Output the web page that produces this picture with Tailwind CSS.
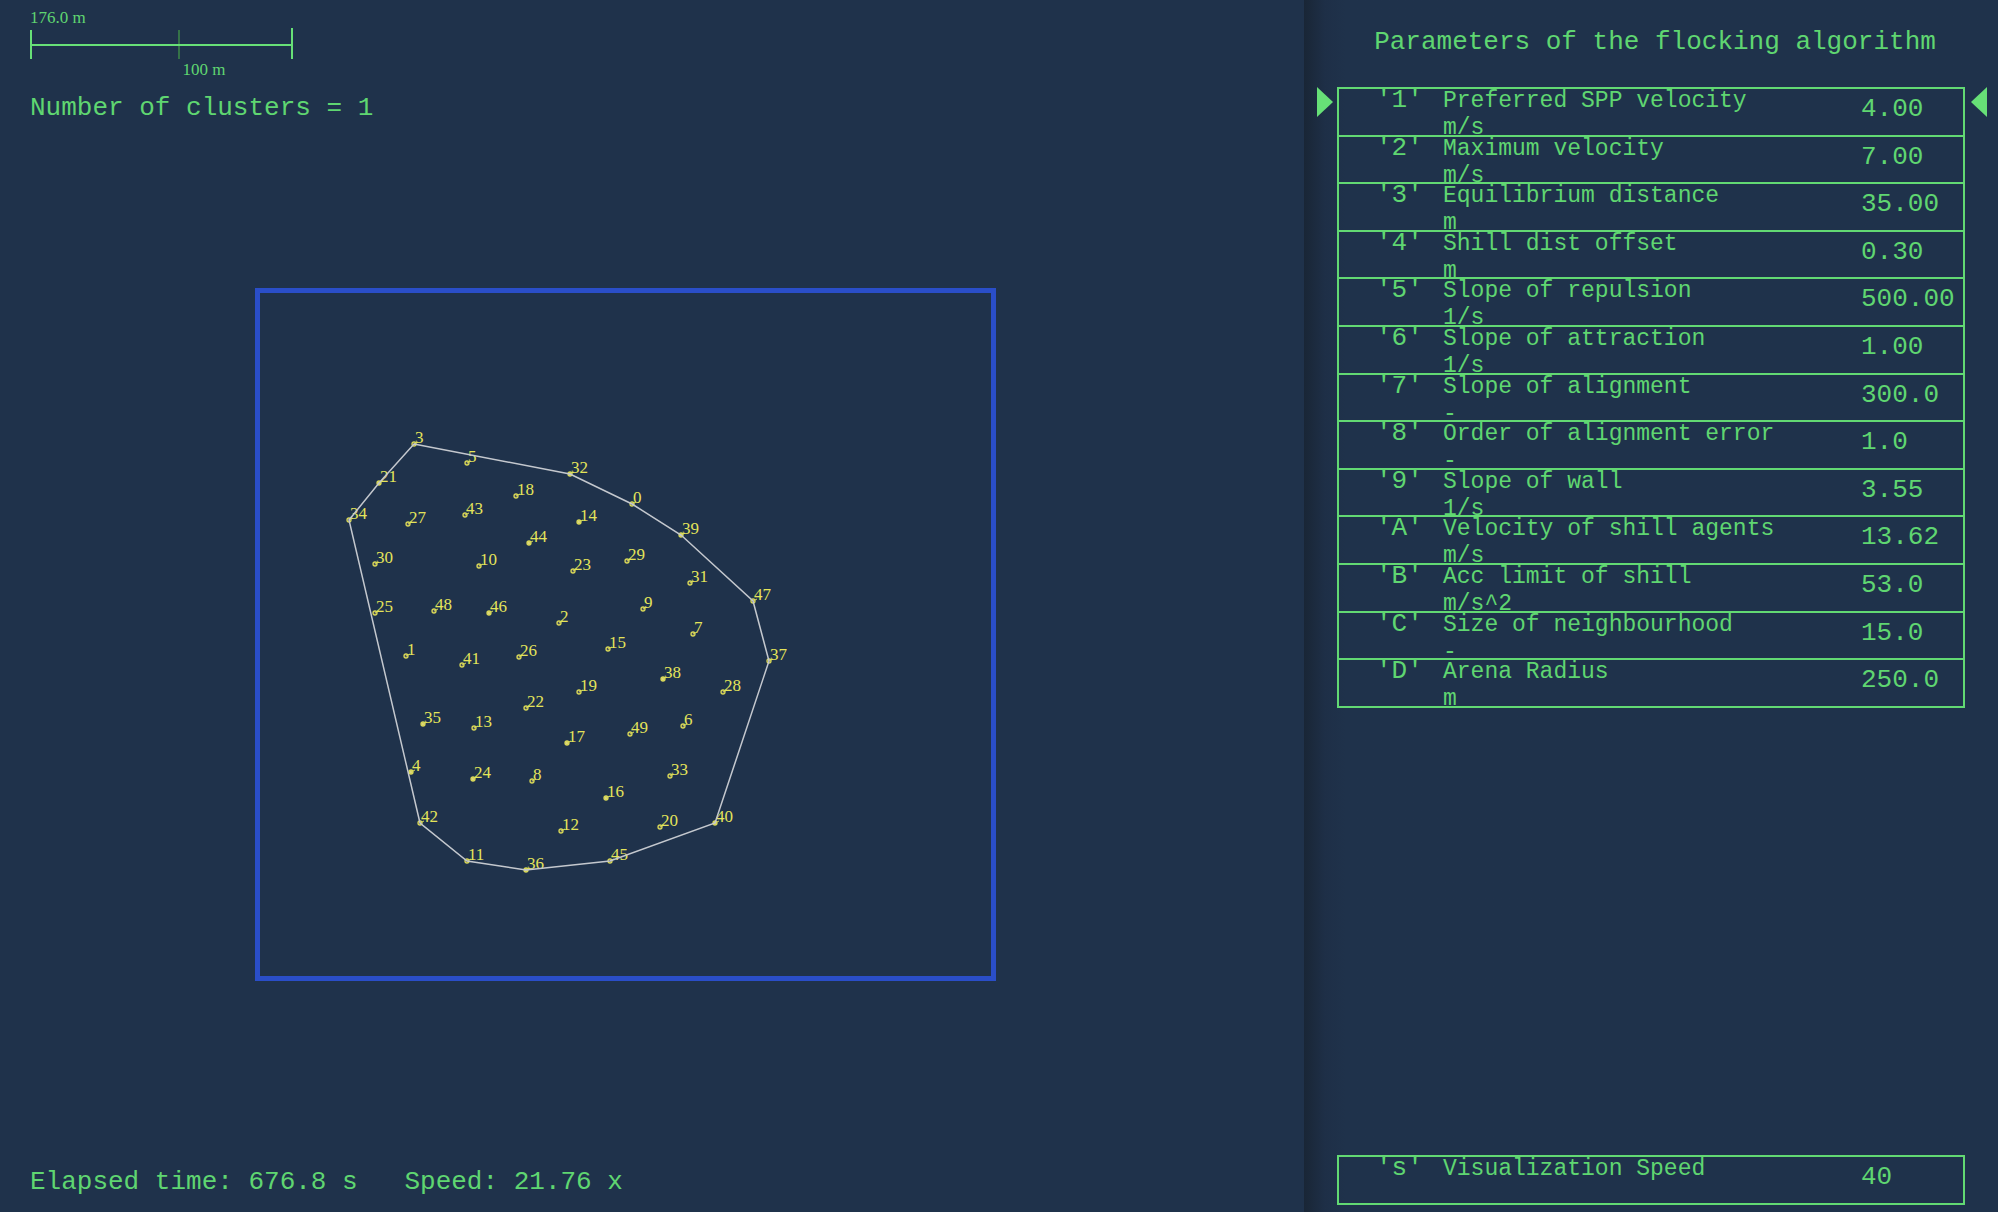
<!DOCTYPE html>
<html lang="en">
<head>
<meta charset="utf-8">
<title>Flocking simulation</title>
<script src="https://cdn.jsdelivr.net/npm/@tailwindcss/browser@4"></script>
</head>
<body class="flex min-h-screen bg-[#1f324b] font-['Liberation_Mono',monospace] text-[26px] leading-8 text-[#5fd671]">

<main class="flex min-w-0 flex-1 flex-col pt-2 pr-8 pb-[14px] pl-[30px]">
  <!-- Map scale -->
  <figure class="flex w-[263px] flex-col font-['Liberation_Serif',serif] text-[17px] leading-5">
    <span>176.0 m</span>
    <svg class="h-8 w-full" viewBox="0 0 263 32" shape-rendering="crispEdges" aria-hidden="true">
      <path d="M149 2V31" stroke="#357348" stroke-width="2"/>
      <path d="M1 2V31M262 0V31M0 17H263" stroke="#67e077" stroke-width="2"/>
    </svg>
    <figcaption class="pl-[58%]">100 m</figcaption>
  </figure>
  <p class="mt-3">Number of clusters = 1</p>

  <!-- Arena with agents and their convex hull -->
  <div class="flex flex-1 items-center justify-center pr-[52px] pb-[22px]">
    <svg id="arena" class="h-[693px] w-[741px] shrink-0 fill-[#e4e45a] font-['Liberation_Serif',serif] text-[17px]" viewBox="255 289 741 693" role="img" aria-label="Arena">
      <rect x="257.5" y="291.5" width="736" height="688" fill="none" stroke="#2a4ec8" stroke-width="5"/>
    </svg>
  </div>

  <p class="whitespace-pre">Elapsed time: 676.8 s   Speed: 21.76 x</p>
</main>

<aside class="flex w-[694px] shrink-0 flex-col bg-linear-to-r from-[#192636] via-[#1e2f47] via-[3%] to-[#1f324b] to-[6%] px-[33px] pt-[26px] pb-[7px]">
  <h1 class="pl-2 text-center">Parameters of the flocking algorithm</h1>

  <div class="relative mt-[29px]">
    <svg class="absolute top-0 -left-5 h-[30px] w-4" viewBox="0 0 16 30" fill="#67e077" aria-hidden="true"><path d="M0 0L16 15L0 30Z"/></svg>
    <svg class="absolute top-0 -right-[22px] h-[30px] w-4" viewBox="0 0 16 30" fill="#67e077" aria-hidden="true"><path d="M16 0L0 15L16 30Z"/></svg>
    <table class="h-[621px] w-full table-fixed border-collapse border-2 border-[#62d973]">
      <colgroup><col class="w-[105px]"><col><col class="w-[103px]"></colgroup>
      <tbody id="params"></tbody>
    </table>
  </div>

  <table class="mt-auto h-[50px] w-full table-fixed border-collapse border-2 border-[#62d973]">
    <colgroup><col class="w-[105px]"><col><col class="w-[103px]"></colgroup>
    <tbody id="view"></tbody>
  </table>
</aside>

<script>
const row = ([key, name, unit, value]) => `
  <tr class="border-2 border-[#62d973]">
    <td class="p-0 pl-[37px] align-top"><div class="h-10 leading-[22px]">'${key}'</div></td>
    <td class="p-0 align-top text-[23px]"><div class="h-10 whitespace-nowrap"><div class="leading-6">${name}</div><div class="leading-[30px]">${unit}</div></div></td>
    <td class="p-0 align-top"><div class="h-10 leading-10">${value}</div></td>
  </tr>`;

document.getElementById('params').innerHTML = [
  ['1', 'Preferred SPP velocity', 'm/s', '4.00'],
  ['2', 'Maximum velocity', 'm/s', '7.00'],
  ['3', 'Equilibrium distance', 'm', '35.00'],
  ['4', 'Shill dist offset', 'm', '0.30'],
  ['5', 'Slope of repulsion', '1/s', '500.00'],
  ['6', 'Slope of attraction', '1/s', '1.00'],
  ['7', 'Slope of alignment', '-', '300.0'],
  ['8', 'Order of alignment error', '-', '1.0'],
  ['9', 'Slope of wall', '1/s', '3.55'],
  ['A', 'Velocity of shill agents', 'm/s', '13.62'],
  ['B', 'Acc limit of shill', 'm/s^2', '53.0'],
  ['C', 'Size of neighbourhood', '-', '15.0'],
  ['D', 'Arena Radius', 'm', '250.0'],
].map(row).join('');
document.getElementById('view').innerHTML = row(['s', 'Visualization Speed', '', '40']);

// Agent positions, indexed by agent number
const agents = [
  [632,505],[406,657],[559,624],[414,445],[411,773],[467,464],[683,727],[693,635],[532,782],[643,610],
  [479,567],[467,862],[561,832],[474,729],[579,523],[608,650],[606,799],[567,744],[516,497],[579,693],
  [660,828],[379,484],[526,709],[573,572],[473,780],[375,614],[519,658],[408,525],[723,693],[627,562],
  [375,565],[690,584],[570,475],[670,777],[349,521],[423,725],[526,871],[769,662],[663,680],[681,536],
  [715,824],[462,666],[420,824],[465,516],[529,544],[610,862],[489,614],[753,602],[434,612],[630,735],
];
const solid = new Set([21, 44, 46, 14, 35, 24, 17, 16, 40, 38, 4, 36, 39, 32]);
const hull = [3, 32, 0, 39, 47, 37, 40, 45, 36, 11, 42, 34, 21].map(i => agents[i].join(',')).join(' ');
document.getElementById('arena').innerHTML +=
  agents.map(([x, y], i) => `<circle cx="${x}" cy="${y}" r="2" stroke="#d9d957" stroke-width="1.3" fill="${solid.has(i) ? '#dcd680' : '#4a5058'}"/>`
    + `<path d="M${x} ${y}l4 -2" stroke="#d9d957" stroke-width="1"/>`
    + `<text x="${x + 1}" y="${y - 1}">${i}</text>`).join('')
  + `<polygon points="${hull}" fill="none" stroke="#c4c8ce" stroke-width="1.5"/>`;
</script>
</body>
</html>
